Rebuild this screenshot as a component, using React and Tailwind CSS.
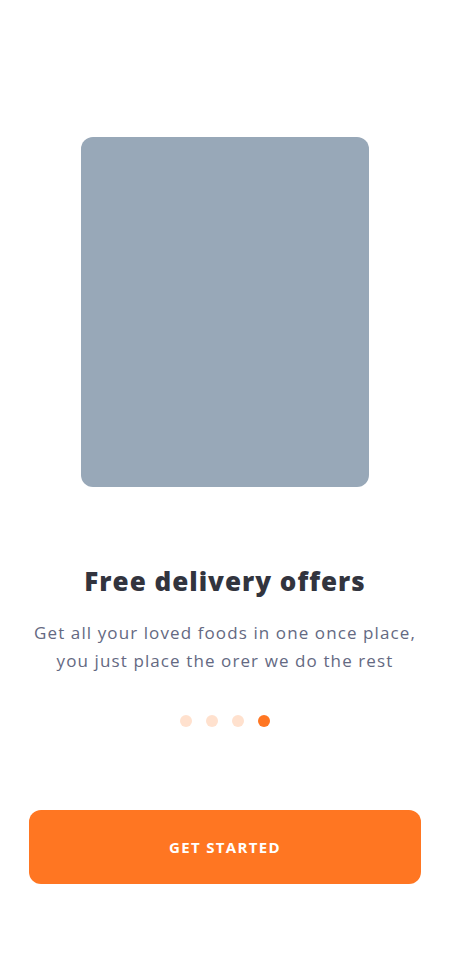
export default function App() {
    const dots = [false, false, false, true];

    return (
        <div className="min-h-[975px] w-[450px] bg-white flex flex-col items-center font-['Open_Sans',sans-serif]">
            {/* Illustration placeholder */}
            <div className="mt-[137px] w-[288px] h-[350px] rounded-[12px] bg-[#98A8B8]" />

            <h1 className="mt-[78px] text-[26px] leading-[32px] font-extrabold text-[#32343E] tracking-[1px]">
                Free delivery offers
            </h1>

            <p className="mt-[22px] text-center text-[17px] leading-[28px] text-[#646982] tracking-[1.1px]">
                Get all your loved foods in one once place,
                <br />
                you just place the orer we do the rest
            </p>

            <div className="mt-[40px] flex items-center gap-[14px]">
                {dots.map((active, i) => (
                    <span
                        key={i}
                        className={`w-3 h-3 rounded-full ${active ? "bg-[#FF7622]" : "bg-[#FFE1CE]"}`}
                    />
                ))}
            </div>

            <button className="mt-[83px] w-[392px] h-[74px] rounded-[12px] bg-[#FF7622] text-white text-[15px] font-bold tracking-[1.35px]">
                GET STARTED
            </button>
        </div>
    );
}
